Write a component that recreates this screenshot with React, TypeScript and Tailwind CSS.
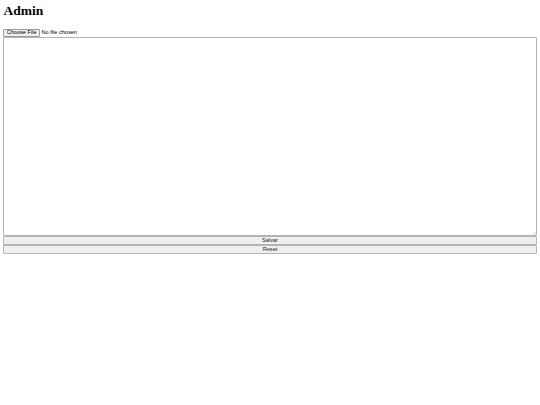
export default function App() {
  return (
    <div className="bg-white px-[3.4px] font-['Liberation_Sans',Arial,sans-serif] text-black">
      <h1 className="mt-[3px] mb-[10.7px] font-['Liberation_Serif','Times_New_Roman',serif] text-[13.5px] leading-[15px] font-bold">
        Admin
      </h1>
      <div className="flex h-[8px] items-center text-[5.6px] leading-none">
        <span className="mr-[1.7px] flex h-[8px] items-center rounded-[1px] border border-[#9a9a9a] bg-[#efefef] px-[2.3px]">
          Choose File
        </span>
        <span>No file chosen</span>
      </div>
      <div className="relative mt-[0.5px]">
        <textarea className="block h-[199px] w-full resize-none rounded-[1px] border border-[#b4b4b4] bg-white text-[5.6px] outline-none" />
        <svg className="absolute right-[1px] bottom-[1px]" width="4" height="4" viewBox="0 0 4 4">
          <path d="M4 0.5L0.5 4M4 2.5L2.5 4" stroke="#b0b0b0" strokeWidth="0.6" />
        </svg>
      </div>
      <button className="block h-[9px] w-full rounded-[1px] border border-[#b4b4b4] bg-[#efefef] text-[5.6px] leading-none text-[#222]">
        Salvar
      </button>
      <button className="block h-[9px] w-full rounded-[1px] border border-[#b4b4b4] bg-[#efefef] text-[5.6px] leading-none text-[#222]">
        Reset
      </button>
    </div>
  );
}
